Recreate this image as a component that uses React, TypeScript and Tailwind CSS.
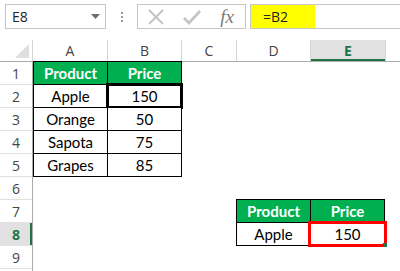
import React from "react";

const COLS = ["A", "B", "C", "D", "E"];
const COL_W = ["w-[75px]", "w-[74px]", "w-[55px]", "w-[74px]", "w-[75px]"];
const ROWS = [1, 2, 3, 4, 5, 6, 7, 8, 9];

const fruits = [
  ["Apple", "150"],
  ["Orange", "50"],
  ["Sapota", "75"],
  ["Grapes", "85"],
];

const cellFont = "font-['Lato','Liberation_Sans',sans-serif] text-[15px] text-black";
const uiFont = "font-['Open_Sans','Liberation_Sans',sans-serif]";

function FormulaBar() {
  return (
    <div className="flex h-[40px] items-start pt-[4px] bg-white">
      {/* name box */}
      <div className={`ml-[5px] flex h-[25px] w-[101px] items-center justify-between border border-[#c6c6c6] pl-[6px] pr-[5px] text-[14px] text-[#222] ${uiFont}`}>
        <span>E8</span>
        <svg width="9" height="5" viewBox="0 0 9 5">
          <path d="M0 0h9L4.5 5z" fill="#6d6d6d" />
        </svg>
      </div>
      {/* grip dots */}
      <div className="flex h-[25px] w-[31px] flex-col items-center justify-center gap-[2px]">
        <span className="h-[2px] w-[2px] bg-[#9a9a9a]" />
        <span className="h-[2px] w-[2px] bg-[#9a9a9a]" />
        <span className="h-[2px] w-[2px] bg-[#9a9a9a]" />
      </div>
      {/* cancel / enter / fx */}
      <div className="flex h-[25px] w-[109px] items-center border border-[#c6c6c6]">
        <div className="flex w-[36px] justify-center">
          <svg width="16" height="16" viewBox="0 0 16 16">
            <path d="M1 1l14 14M15 1L1 15" stroke="#c4c4c4" strokeWidth="2" />
          </svg>
        </div>
        <div className="flex w-[36px] justify-center">
          <svg width="18" height="16" viewBox="0 0 18 16">
            <path d="M1 9l5 5L17 2" stroke="#c4c4c4" strokeWidth="2.6" fill="none" />
          </svg>
        </div>
        <div className="flex w-[36px] justify-center">
          <span className="font-['Liberation_Serif',serif] text-[19px] italic leading-none text-[#7a7a7a]">fx</span>
        </div>
      </div>
      {/* formula input */}
      <div className="ml-[4px] flex h-[25px] flex-1 border-y border-l border-[#c6c6c6]">
        <div className={`flex w-[64px] items-center bg-[#ffff00] pl-[12px] text-[14px] text-[#222] ${uiFont}`}>=B2</div>
      </div>
    </div>
  );
}

function ColumnHeaders() {
  return (
    <div className="flex h-[22px] border-b border-[#ababab]">
      <div className="relative w-[33px] border-r border-[#d4d4d4]">
        <svg className="absolute bottom-[3px] right-[3px]" width="14" height="14" viewBox="0 0 14 14">
          <path d="M14 0v14H0z" fill="#dfdfdf" />
        </svg>
      </div>
      {COLS.map((c, i) => {
        const active = c === "E";
        return (
          <div
            key={c}
            className={`${COL_W[i]} flex items-center justify-center border-r border-[#d4d4d4] text-[14px] ${uiFont} ${
              active ? "bg-[#e1e1e1] font-bold text-[#217346] shadow-[inset_0_-2px_0_#217346]" : "text-[#444]"
            }`}
          >
            {c}
          </div>
        );
      })}
      <div className="flex-1" />
    </div>
  );
}

function RowHeaders() {
  return (
    <div className="flex w-[33px] flex-col border-r border-[#ababab]">
      {ROWS.map((r) => {
        const active = r === 8;
        return (
          <div
            key={r}
            className={`flex h-[23px] shrink-0 items-center justify-center border-b border-[#e1e1e1] text-[14px] ${uiFont} ${
              active ? "bg-[#e1e1e1] font-bold text-[#217346] shadow-[inset_-2px_0_0_#217346]" : "text-[#444]"
            }`}
          >
            {r}
          </div>
        );
      })}
    </div>
  );
}

function Cell({ children, head, className = "" }: { children: React.ReactNode; head?: boolean; className?: string }) {
  return (
    <div
      className={`relative flex h-[23px] items-center justify-center border-r border-b border-black ${cellFont} ${
        head ? "bg-[#00b050] font-bold text-white" : "bg-white"
      } ${className}`}
    >
      {children}
    </div>
  );
}

function Sheet() {
  return (
    <div className="flex flex-1">
      <RowHeaders />
      <div className="flex flex-col">
        {/* rows 1-5: fruit table in A:B */}
        <div className="flex">
          <div className="grid grid-cols-[74px_74px] border-t border-l border-black -mt-px">
            <Cell head>Product</Cell>
            <Cell head>Price</Cell>
            {fruits.map(([name, price], i) => (
              <React.Fragment key={name}>
                <Cell>{name}</Cell>
                <Cell>
                  {price}
                  {i === 0 && <span className="absolute -left-[2px] -top-[2px] h-[26px] w-[77px] border-[3px] border-black" />}
                </Cell>
              </React.Fragment>
            ))}
          </div>
        </div>
        <div className="h-[23px]" />
        {/* rows 7-8: lookup result in D:E */}
        <div className="flex">
          <div className="w-[203px]" />
          <div className="grid grid-cols-[74px_74px] border-t border-l border-black -mt-px">
            <Cell head>Product</Cell>
            <Cell head>Price</Cell>
            <Cell>Apple</Cell>
            <Cell>
              150
              <span className="absolute -left-[3px] -top-[2px] h-[26px] w-[79px] border-[3px] border-[#ff0000]" />
              <span className="absolute -bottom-[2px] -right-[3px] h-[4px] w-[4px] bg-[#217346]" />
            </Cell>
          </div>
        </div>
      </div>
    </div>
  );
}

export default function App() {
  return (
    <div className="flex h-[271px] w-[400px] flex-col overflow-hidden bg-white">
      <FormulaBar />
      <ColumnHeaders />
      <Sheet />
    </div>
  );
}
